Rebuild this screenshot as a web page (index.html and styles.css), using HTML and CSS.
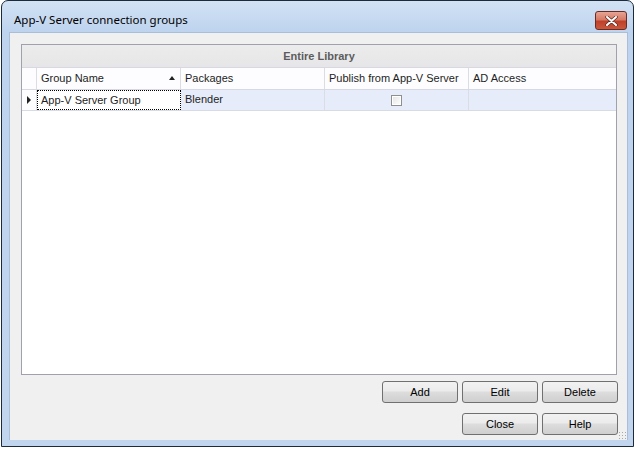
FILE: index.html
```html
<!DOCTYPE html>
<html lang="en">
<head>
    <meta charset="UTF-8">
    <title>App-V Server connection groups</title>
    <link rel="stylesheet" href="styles.css">
</head>
<body>
    <div class="window">
        <div class="titlebar">
            <span class="title">App-V Server connection groups</span>
            <button class="close-x" aria-label="Close">
                <svg width="15" height="10" viewBox="0 0 15 10">
                    <path d="M3 1 L12 9 M12 1 L3 9" stroke="#5a2a22" stroke-width="3.4" stroke-linecap="round"/>
                    <path d="M3 1 L12 9 M12 1 L3 9" stroke="#ffffff" stroke-width="2" stroke-linecap="round"/>
                </svg>
            </button>
        </div>
        <div class="client">
            <div class="grid">
                <div class="band">Entire Library</div>
                <div class="row header">
                    <div class="cell rowhead"></div>
                    <div class="cell">Group Name <span class="sort"></span></div>
                    <div class="cell">Packages</div>
                    <div class="cell">Publish from App-V Server</div>
                    <div class="cell">AD Access</div>
                </div>
                <div class="row data">
                    <div class="cell rowhead"><span class="pointer"></span></div>
                    <div class="cell focused">App-V Server Group</div>
                    <div class="cell">Blender</div>
                    <div class="cell center"><span class="checkbox"></span></div>
                    <div class="cell"></div>
                </div>
            </div>
            <div class="buttons">
                <button class="btn">Add</button>
                <button class="btn">Edit</button>
                <button class="btn">Delete</button>
            </div>
            <div class="buttons bottom">
                <button class="btn">Close</button>
                <button class="btn">Help</button>
            </div>
            <span class="grip"></span>
        </div>
    </div>
</body>
</html>
```

FILE: styles.css
```css
body {
    margin: 0;
    background-color: #ffffff;
    font-family: "Liberation Sans", Arial, sans-serif;
}

.window {
    width: 633px;
    height: 447px;
    margin-left: 1px;
    border: 1px solid #1c2a3a;
    border-radius: 7px 7px 0 0;
    background: linear-gradient(#d2e2f4, #bed3ee 30px, #c1d5ef);
    display: flex;
    flex-direction: column;
    box-sizing: border-box;
    padding: 0 5px 6px 7px;
}

.titlebar {
    height: 31px;
    display: flex;
    align-items: center;
    position: relative;
}

.title {
    font-family: "Noto Sans", "DejaVu Sans", sans-serif;
    font-size: 11.5px;
    color: #000000;
    margin-left: 5px;
    margin-top: 5px;
}

.close-x {
    position: absolute;
    right: 1px;
    top: 10px;
    width: 32px;
    height: 19px;
    border: 1px solid #6d2a22;
    border-radius: 3px;
    padding: 0;
    background: linear-gradient(#e8a493, #d47a66 45%, #c0402a 55%, #c9583d);
    display: flex;
    align-items: center;
    justify-content: center;
}

.client {
    flex: 1;
    background-color: #f0f0f0;
    border: 1px solid #a9bed8;
    border-bottom: none;
    padding: 11px 10px 0 11px;
    display: flex;
    flex-direction: column;
    position: relative;
    font-size: 11px;
}

.grid {
    height: 331px;
    box-sizing: border-box;
    border: 1px solid #a0a0ae;
    background-color: #ffffff;
}

.band {
    height: 22px;
    line-height: 22px;
    text-align: center;
    font-weight: bold;
    color: #5c5c5c;
    background: linear-gradient(#ececec, #e6e6e8);
    border-bottom: 1px solid #d8d8e0;
}

.row {
    display: grid;
    grid-template-columns: 15px 144px 144px 144px 1fr;
}

.cell {
    border-right: 1px solid #dcdce4;
    padding: 0 4px;
    white-space: nowrap;
    overflow: hidden;
    color: #1e1e1e;
    box-sizing: border-box;
    position: relative;
}

.cell:last-child {
    border-right: none;
}

.header {
    height: 21px;
    line-height: 20px;
    background-color: #fdfdff;
    border-bottom: 1px solid #d6d9e4;
}

.data {
    height: 20px;
    line-height: 18px;
    background-color: #e6ecf9;
    border-bottom: 1px solid #d6dbe6;
}

.rowhead {
    background-color: #fdfdff;
}

.sort {
    position: absolute;
    right: 5px;
    top: 8px;
    border-bottom: 4px solid #222222;
    border-left: 3.5px solid transparent;
    border-right: 3.5px solid transparent;
}

.pointer {
    position: absolute;
    left: 5px;
    top: 6px;
    border-left: 4px solid #222222;
    border-top: 4px solid transparent;
    border-bottom: 4px solid transparent;
}

.focused {
    background-color: #ffffff;
    border: 1px dotted #000000;
    padding-left: 3px;
}

.center {
    display: flex;
    align-items: center;
    justify-content: center;
}

.checkbox {
    width: 11px;
    height: 11px;
    box-sizing: border-box;
    border: 1px solid #8e8f8f;
    background: linear-gradient(135deg, #e4e4e4, #ffffff);
    outline: 1px solid #ffffff;
    outline-offset: -2px;
}

.buttons {
    display: flex;
    justify-content: flex-end;
    gap: 4px;
    margin-top: 6px;
    margin-right: -1px;
}

.buttons.bottom {
    margin-top: 10px;
}

.btn {
    width: 76px;
    height: 22px;
    border: 1px solid #707070;
    border-radius: 3px;
    background: linear-gradient(#f2f2f2, #ebebeb 45%, #dddddd 50%, #cfcfcf);
    font-family: "Liberation Sans", Arial, sans-serif;
    font-size: 11px;
    color: #000000;
    padding: 0;
}

.grip {
    position: absolute;
    right: 1px;
    bottom: 1px;
    width: 8px;
    height: 8px;
    background-image: radial-gradient(circle, #a8a8a8 0.8px, transparent 1px);
    background-size: 3px 3px;
}
```
